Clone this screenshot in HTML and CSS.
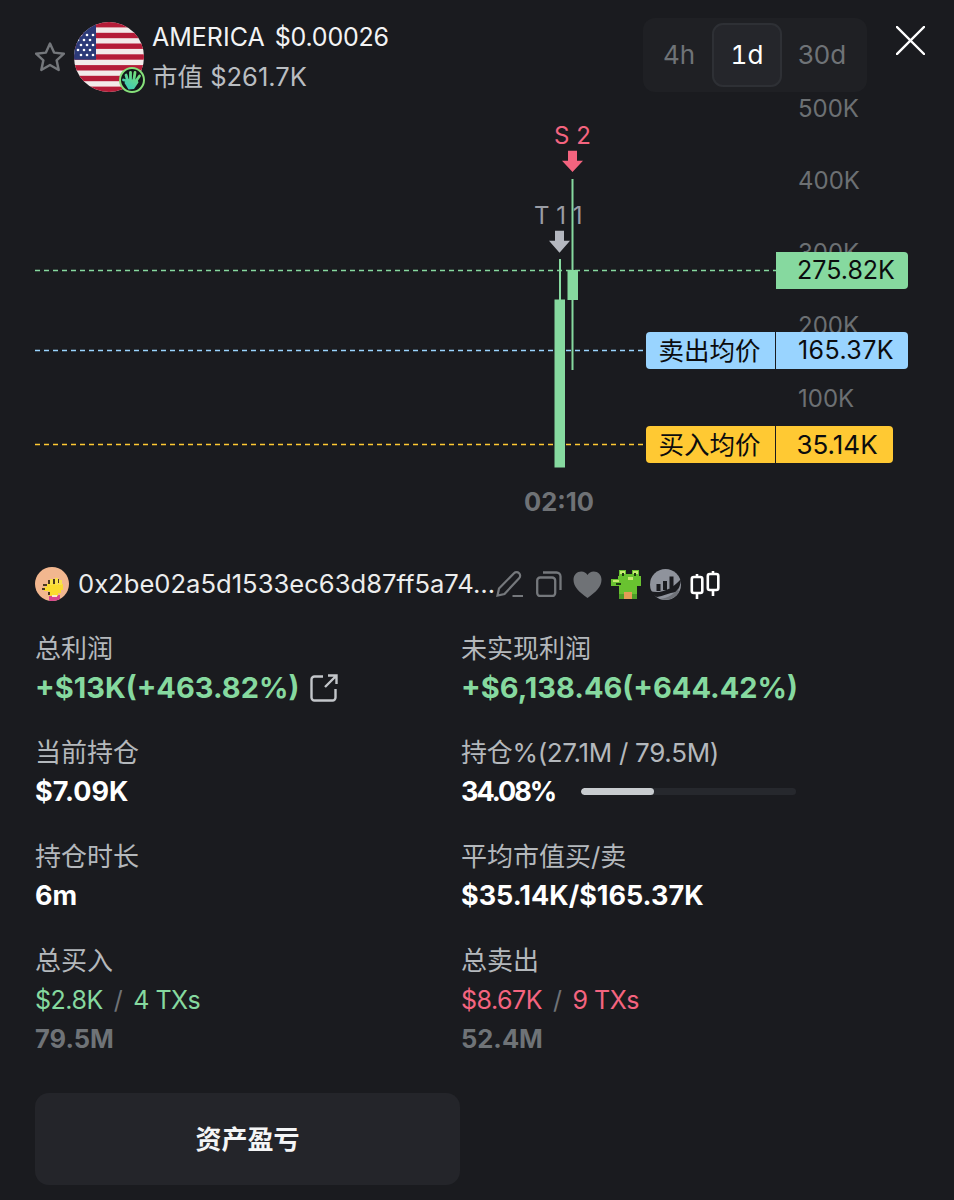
FILE: index.html
```html
<!DOCTYPE html>
<html lang="zh-CN">
<head>
  <meta charset="UTF-8">
  <meta name="viewport" content="width=device-width, initial-scale=1.0">
  <title>AMERICA</title>
  <link rel="stylesheet" href="styles.css">
</head>
<body>
  <header class="top">
    <div class="token">
      <svg class="star" viewBox="1 1 28 28" width="30" height="30"><path d="M15 2.500l3.800 8.400 9.200 1-6.800 6.200 1.900 9-8.100-4.600-8.100 4.600 1.900-9L2 11.900l9.200-1z" fill="none" stroke="#74777b" stroke-width="2.300" stroke-linejoin="round"/></svg>
      <div class="flag">
        <svg viewBox="0 0 70 70" width="70" height="70">
          <defs><clipPath id="round"><circle cx="35" cy="35" r="35"/></clipPath></defs>
          <g clip-path="url(#round)">
            <rect width="70" height="70" fill="#f3ebea"/>
            <g fill="#b51c38">
              <rect y="0" width="70" height="5.400"/>
              <rect y="10.800" width="70" height="5.400"/>
              <rect y="21.500" width="70" height="5.400"/>
              <rect y="32.300" width="70" height="5.400"/>
              <rect y="43.100" width="70" height="5.400"/>
              <rect y="53.800" width="70" height="5.400"/>
              <rect y="64.600" width="70" height="5.400"/>
            </g>
            <rect width="22" height="37.700" fill="#2c3a78"/>
            <g fill="#fff">
              <circle cx="7" cy="13" r="1.300"/><circle cx="13" cy="13" r="1.300"/><circle cx="19" cy="13" r="1.300"/>
              <circle cx="4" cy="18" r="1.300"/><circle cx="10" cy="18" r="1.300"/><circle cx="16" cy="18" r="1.300"/>
              <circle cx="7" cy="23" r="1.300"/><circle cx="13" cy="23" r="1.300"/><circle cx="19" cy="23" r="1.300"/>
              <circle cx="4" cy="28" r="1.300"/><circle cx="10" cy="28" r="1.300"/><circle cx="16" cy="28" r="1.300"/>
              <circle cx="7" cy="33" r="1.300"/><circle cx="13" cy="33" r="1.300"/><circle cx="19" cy="33" r="1.300"/>
            </g>
          </g>
        </svg>
        <svg class="badge" viewBox="0 0 26 26" width="26" height="26">
          <defs><linearGradient id="hand" gradientUnits="userSpaceOnUse" x1="6" y1="23" x2="20" y2="4"><stop offset="0" stop-color="#35c9c0"/><stop offset="1" stop-color="#7fe36f"/></linearGradient></defs>
          <circle cx="13" cy="13" r="12" fill="#12161a" stroke="#86e07a" stroke-width="2"/>
          <g stroke="url(#hand)" stroke-width="2.800" stroke-linecap="round" fill="none">
            <path d="M8.500 13L7 8"/><path d="M11.500 12L11.500 5.500"/><path d="M15 12L16 5.500"/><path d="M17 14L20.500 9"/><path d="M9 14L4.500 13"/>
          </g>
          <path d="M7 12L18.500 12.500 19.500 15.500 15 22 9.500 22.500 5.500 16z" fill="url(#hand)"/>
        </svg>
      </div>
      <div class="token-text">
        <div class="token-name">AMERICA<span class="price">$0.00026</span></div>
        <div class="token-cap">市值 $261.7K</div>
      </div>
    </div>
    <div class="tabs">
      <span class="tab tab-4h">4h</span>
      <span class="tab tab-1d active">1d</span>
      <span class="tab tab-30d">30d</span>
    </div>
    <svg class="close" viewBox="0 0 29 29" width="29" height="29"><path d="M1 1l27 27M28 1L1 28" stroke="#fff" stroke-width="2.400" stroke-linecap="square" fill="none"/></svg>
  </header>

  <section class="chart">
    <span class="axis" style="top:1px">500K</span>
    <span class="axis" style="top:73px">400K</span>
    <span class="axis" style="top:145px">300K</span>
    <span class="axis" style="top:218px">200K</span>
    <span class="axis" style="top:291px">100K</span>

    <svg class="plot" viewBox="0 0 954 475" width="954" height="475">
      <line x1="35" y1="178.500" x2="776" y2="178.500" stroke="#86d99f" stroke-width="1.500" stroke-dasharray="5 4"/>
      <line x1="35" y1="258.500" x2="646" y2="258.500" stroke="#9bd5ff" stroke-width="1.500" stroke-dasharray="5 4"/>
      <line x1="35" y1="352.500" x2="646" y2="352.500" stroke="#ffc933" stroke-width="1.500" stroke-dasharray="5 4"/>
      <rect x="559" y="167" width="2" height="50" fill="#86d99f"/>
      <rect x="554.500" y="207.500" width="10.500" height="168" fill="#86d99f"/>
      <rect x="571.500" y="87" width="2" height="191" fill="#86d99f"/>
      <rect x="567.500" y="178" width="10.500" height="30" fill="#86d99f"/>
      <path d="M568 58.700h9v10h6l-10.500 11.300L562 68.700h6z" fill="#f4647f"/>
      <path d="M555 138.700h9v10h6l-10.500 12L549 148.700h6z" fill="#b4b7bf"/>
    </svg>

    <span class="mark mark-sell">S 2</span>
    <span class="mark mark-buy">T 1 1</span>

    <div class="tag tag-now"><span class="tag-value">275.82K</span></div>
    <div class="tag tag-sell"><span class="tag-name">卖出均价</span><span class="tag-value">165.37K</span></div>
    <div class="tag tag-buy"><span class="tag-name">买入均价</span><span class="tag-value">35.14K</span></div>

    <span class="time">02:10</span>
  </section>

  <section class="wallet">
    <svg class="avatar" viewBox="0 0 34 34" width="34" height="34" shape-rendering="crispEdges">
      <defs><clipPath id="ava"><circle cx="17" cy="17" r="17"/></clipPath></defs>
      <g clip-path="url(#ava)">
        <rect width="34" height="34" fill="#f2b78f"/>
        <rect x="14" y="28" width="11" height="6" fill="#d8478f"/>
        <path d="M12 17h16v6h-2v3h-3v3h-9v-5h-5v-4h3z" fill="#fbdc2e"/>
        <path d="M15 12h3v6h-3zM20 11h3v7h-3zM24 13h3v5h-3z" fill="#fbe24a"/>
        <path d="M13 13h2v4h-2zM18 12h2v5h-2zM23 12h1v4h-1zM8 17h4v2H8zM7 21h3v2H7zM13 25h2v3h-2z" fill="#4a3820"/>
        <rect x="17" y="28" width="5" height="2" fill="#f8e8c8"/>
      </g>
    </svg>
    <span class="address">0x2be02a5d1533ec63d87ff5a74…</span>
    <svg class="ico-pencil" viewBox="0 0 28 28" width="28" height="28"><path d="M1.500 25.500l1.500-7L18 3.200a3.600 3.600 0 0 1 5.100 0 3.600 3.600 0 0 1 0 5.100L8.500 24zM16.500 26h10.500" fill="none" stroke="#75787c" stroke-width="2.200"/></svg>
    <svg class="ico-copy" viewBox="0 0 26 26" width="26" height="26"><rect x="1.200" y="6.500" width="18" height="18.500" rx="3" fill="none" stroke="#75787c" stroke-width="2.300"/><path d="M7 1.500h13.500a4 4 0 0 1 4 4v13.500" fill="none" stroke="#75787c" stroke-width="2.300"/></svg>
    <svg class="ico-heart" viewBox="0 0 29 27" width="29" height="27"><path d="M14.500 27C6 21 .500 15.500.500 8.700.500 3.800 4 .500 8.300.500c2.800 0 4.800 1.300 6.200 3.600C15.900 1.800 17.900.500 20.700.500 25 .500 28.500 3.800 28.500 8.700 28.500 15.500 23 21 14.500 27z" fill="#6f7276"/></svg>
    <svg class="ico-frog" viewBox="0 0 30 30" width="30" height="30" shape-rendering="crispEdges">
      <path d="M8 1h7v4h6V1h7v6h2v10h-4v13H8V17H0v-7h7V7h1z" fill="#69c230"/>
      <path d="M9 2h5v3H9zM22 2h5v3h-5zM2 11h6v2H2zM17 8h5v3h-5z" fill="#c6ec70"/>
      <path d="M11 4h2v3h-2zM23 4h2v3h-2zM5 14h5v2H5z" fill="#1d3a10"/>
      <path d="M13 23h8v7h-8z" fill="#e59d55"/>
      <path d="M8 25h5v5H8zM21 25h5v5h-5z" fill="#4e9f27"/>
    </svg>
    <svg class="ico-stat" viewBox="0 0 31 31" width="31" height="31">
      <circle cx="15.500" cy="15.500" r="15.500" fill="#8f939c"/>
      <path d="M6.500 22v-7h4v7zM13 21v-9h4v9zM19.500 19V7.500h4v11.500z" fill="#1a1b1f"/>
      <path d="M0 22c9 3 20 0 31-12-.5 7-3 11-5 13-7 1-13 4-19 5-3-1-6-3-7-6z" fill="#1a1b1f"/>
      <path d="M28 20c-4 5-10 9-18 10 7 2 15 0 19-7z" fill="#6f7278"/>
    </svg>
    <svg class="ico-candles" viewBox="0 0 30 30" width="30" height="30"><path d="M7 5v25M23 2v25" stroke="#fff" stroke-width="2.600"/><rect x="1.800" y="8" width="10.500" height="16" rx="2" fill="#1a1b1f" stroke="#fff" stroke-width="2.600"/><rect x="17.800" y="5" width="10.500" height="16" rx="2" fill="#1a1b1f" stroke="#fff" stroke-width="2.600"/></svg>
  </section>

  <section class="stats">
    <div class="stat">
      <div class="label">总利润</div>
      <div class="value green">+$13K(+463.82%)
        <svg class="ico-share" viewBox="0 0 28 28" width="28" height="28"><path d="M13 2.500H4.500a3 3 0 0 0-3 3v18a3 3 0 0 0 3 3h18a3 3 0 0 0 3-3V15M15 13L26 2M18 1.500h8.500V10" fill="none" stroke="#c3c6ca" stroke-width="2.400"/></svg>
      </div>
    </div>
    <div class="stat">
      <div class="label">未实现利润</div>
      <div class="value green">+$6,138.46(+644.42%)</div>
    </div>

    <div class="stat">
      <div class="label">当前持仓</div>
      <div class="value">$7.09K</div>
    </div>
    <div class="stat">
      <div class="label label-tight">持仓%(27.1M / 79.5M)</div>
      <div class="value"><span class="percent">34.08%</span><div class="bar"><div class="bar-fill" style="width:34.08%"></div></div></div>
    </div>

    <div class="stat">
      <div class="label">持仓时长</div>
      <div class="value">6m</div>
    </div>
    <div class="stat">
      <div class="label">平均市值买/卖</div>
      <div class="value">$35.14K/$165.37K</div>
    </div>

    <div class="stat">
      <div class="label">总买入</div>
      <div class="trade green">$2.8K<span class="slash">/</span>4 TXs</div>
      <div class="amount">79.5M</div>
    </div>
    <div class="stat">
      <div class="label">总卖出</div>
      <div class="trade red">$8.67K<span class="slash">/</span>9 TXs</div>
      <div class="amount">52.4M</div>
    </div>
  </section>

  <button class="pnl" type="button">资产盈亏</button>
</body>
</html>
```

FILE: styles.css
```css
* {
  box-sizing: border-box;
}
body {
  margin: 0;
  width: 954px;
  height: 1200px;
  overflow: hidden;
  background: #1a1b1f;
  color: #fff;
  font-family: Inter, "Noto Sans CJK SC", sans-serif;
}

/* header */
.top {
  display: flex;
  align-items: flex-start;
  height: 92px;
  padding: 17px 29px 0 35px;
}
.token {
  display: flex;
  align-items: center;
  height: 80px;
}
.star {
  margin-right: 9px;
}
.flag {
  position: relative;
  width: 70px;
  height: 70px;
  margin-right: 8px;
}
.flag svg {
  display: block;
}
.badge {
  position: absolute;
  right: -1px;
  bottom: -1px;
}
.token-name,
.token-cap {
  line-height: 40px;
  white-space: nowrap;
}
.token-name {
  font-size: 25px;
  color: #f2f3f4;
}
.price {
  margin-left: 10px;
  letter-spacing: -0.2px;
}
.token-cap {
  font-size: 25.5px;
  color: #b9bdc1;
}
.tabs {
  display: flex;
  width: 224px;
  height: 74px;
  margin: 1px 0 0 auto;
  padding: 5px;
  background: #1f2024;
  border-radius: 12px;
}
.tab {
  display: flex;
  align-items: center;
  justify-content: center;
  padding-bottom: 2px;
  font-size: 26px;
  color: #6f7377;
}
.tab-4h {
  width: 62px;
  margin-right: 2px;
}
.tab-1d {
  width: 70px;
  font-feature-settings: "tnum";
}
.tab-30d {
  width: 80px;
}
.tab.active {
  color: #fff;
  background: #25262b;
  border: 2px solid #2e3035;
  border-radius: 11px;
}
.close {
  margin: 9px 0 0 29px;
}

/* chart */
.chart {
  position: relative;
  height: 475px;
}
.plot {
  position: absolute;
  left: 0;
  top: 0;
}
.axis {
  position: absolute;
  left: 798px;
  font-size: 24px;
  line-height: 32px;
  color: #6c7073;
}
.mark {
  position: absolute;
  font-size: 24px;
  line-height: 30px;
  white-space: nowrap;
}
.mark-sell {
  left: 554px;
  top: 29px;
  color: #f4647f;
}
.mark-buy {
  left: 534px;
  top: 109px;
  color: #9a9da5;
}
.tag {
  position: absolute;
  display: flex;
  height: 37px;
  color: #0b0c0e;
  font-size: 25px;
  line-height: 37px;
}
.tag-name {
  width: 129px;
  margin-right: 1px;
  padding-right: 2px;
  font-size: 25.5px;
  text-align: center;
  background-color: var(--tag);
  border-radius: 4px 0 0 4px;
}
.tag-value {
  padding-left: 8px;
  text-align: center;
  background-color: var(--tag);
  border-radius: 0 4px 4px 0;
}
.tag-now {
  --tag: #86d99f;
  left: 776px;
  top: 160px;
}
.tag-now .tag-value,
.tag-sell .tag-value {
  width: 132px;
}
.tag-sell {
  --tag: #99d4ff;
  left: 646px;
  top: 240px;
}
.tag-sell .tag-value {
  letter-spacing: 0.4px;
}
.tag-buy {
  --tag: #ffc933;
  left: 646px;
  top: 334px;
}
.tag-buy .tag-value {
  width: 117px;
  padding-left: 5px;
  font-size: 26px;
}
.time {
  position: absolute;
  left: 524px;
  top: 394px;
  font-size: 25.5px;
  line-height: 32px;
  font-weight: 700;
  color: #6f7276;
}

/* wallet row */
.wallet {
  display: flex;
  align-items: center;
  height: 34px;
  padding-left: 35px;
}
.address {
  flex: none;
  width: 418px;
  margin-left: 9px;
  font-size: 25.6px;
  line-height: 34px;
  white-space: nowrap;
  color: #eceded;
}
.wallet svg {
  flex: none;
}
.ico-copy {
  margin-left: 12px;
}
.ico-heart {
  margin-left: 11px;
}
.ico-frog {
  margin-left: 9px;
}
.ico-stat {
  margin-left: 9px;
}
.ico-candles {
  margin-left: 9px;
}

/* stats */
.stats {
  display: grid;
  grid-template-columns: 426px 1fr;
  row-gap: 27px;
  margin-top: 30px;
  padding-left: 35px;
}
.label {
  font-size: 26px;
  line-height: 36px;
  color: #b4b8bc;
}
.label-tight {
  letter-spacing: -0.3px;
}
.value {
  display: flex;
  align-items: center;
  height: 41px;
  font-size: 27px;
  font-weight: 700;
  white-space: nowrap;
}
.value.green {
  font-size: 29px;
  color: #86d99f;
}
.percent {
  letter-spacing: -2px;
}
.ico-share {
  margin-left: 11px;
}
.bar {
  width: 215px;
  height: 7px;
  margin-left: 26px;
  border-radius: 4px;
  background: #26282d;
  overflow: hidden;
}
.bar-fill {
  height: 100%;
  border-radius: 4px;
  background: #c8cccf;
}
.trade {
  height: 41px;
  padding-top: 1px;
  font-size: 25px;
  line-height: 41px;
  letter-spacing: -0.5px;
}
.trade.green {
  color: #86d99f;
}
.trade.red {
  color: #f4647f;
}
.slash {
  margin: 0 11px;
  color: #6f7276;
}
.amount {
  font-size: 25.5px;
  line-height: 37px;
  font-weight: 700;
  color: #6f7377;
}

/* bottom button */
.pnl {
  display: block;
  width: 425px;
  height: 92px;
  margin: 36px 0 0 35px;
  padding-bottom: 4px;
  border: none;
  border-radius: 14px;
  background: #24252a;
  color: #f4f5f6;
  font-family: inherit;
  font-size: 26px;
  font-weight: 700;
}
```
